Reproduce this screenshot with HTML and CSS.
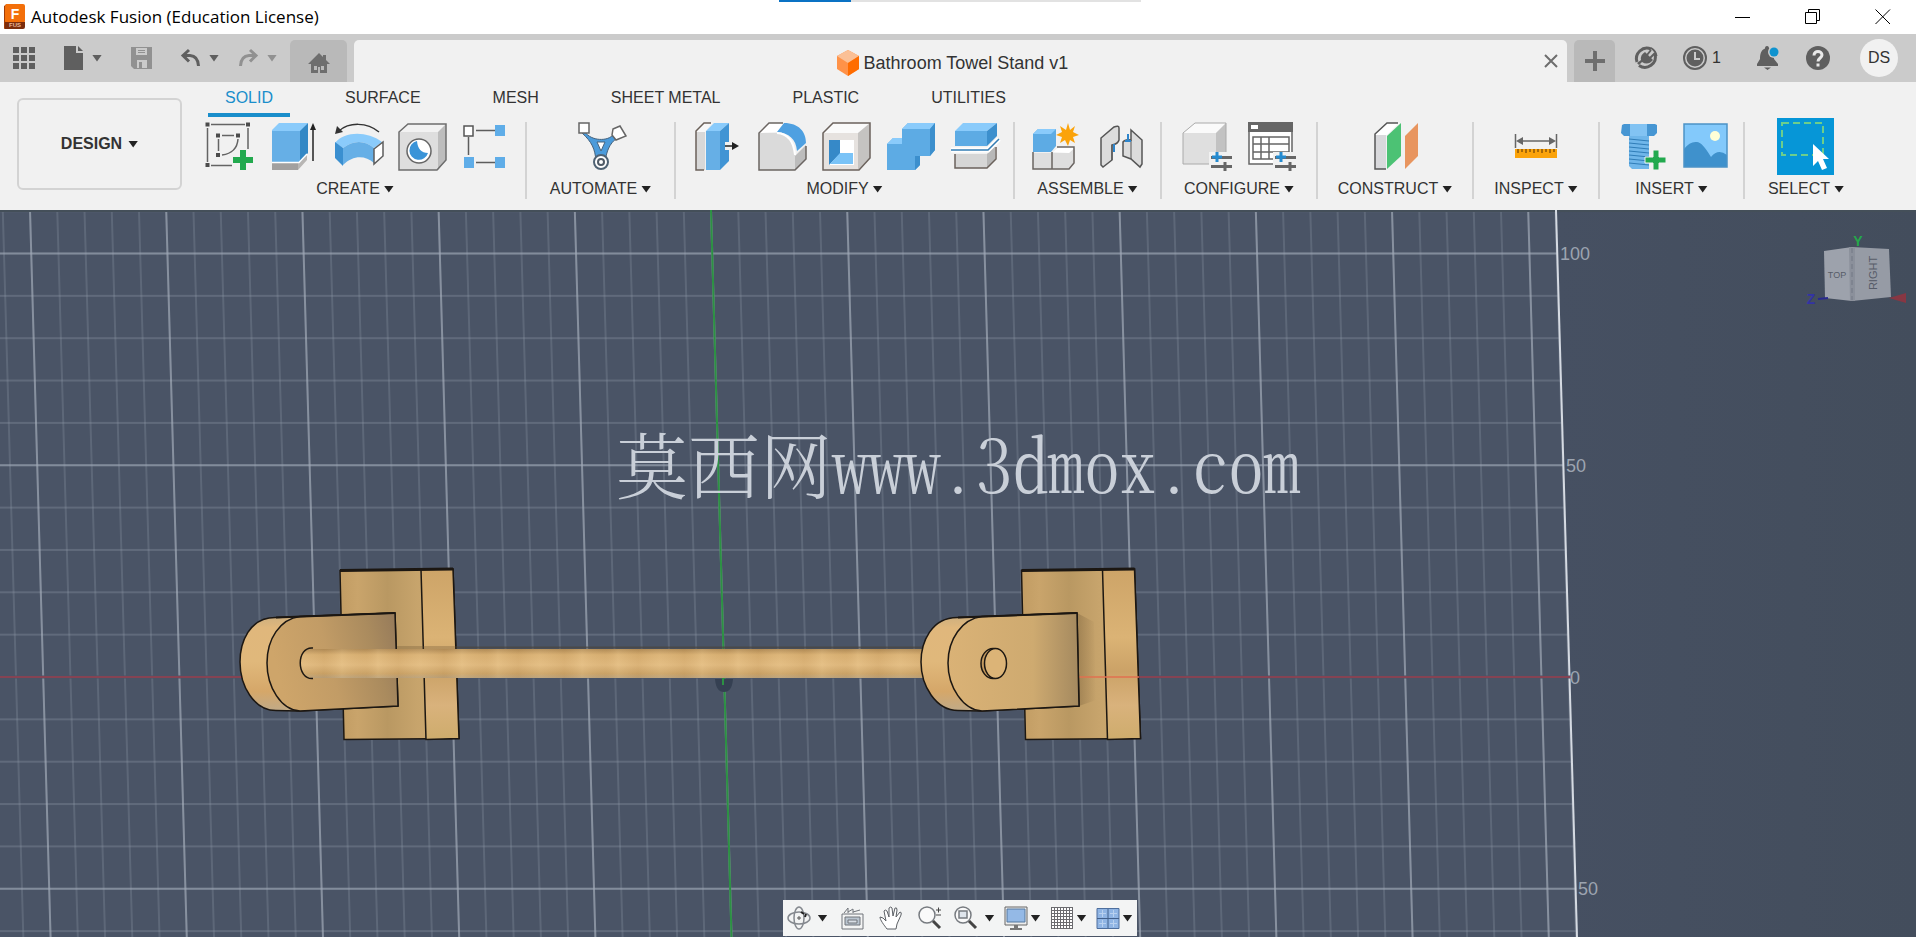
FILE: index.html
```html
<!DOCTYPE html>
<html lang="en">
<head>
<meta charset="utf-8">
<meta name="viewport" content="width=device-width, initial-scale=1">
<title>Autodesk Fusion (Education License)</title>
<link rel="stylesheet" href="styles.css">
</head>
<body>
<div class="app">
  <header class="titlebar">
    <svg class="app-logo" width="22" height="26" viewBox="0 0 22 26" aria-hidden="true">
      <path d="M1 2 4 0V24L1 25Z" fill="#a23c06"/><rect x="2" y="0" width="20" height="19" rx="2" fill="#f36f0a"/><path d="M2 18H22V23Q22 25 20 25H2Z" fill="#7c2d0c"/>
      <text x="12" y="15" class="logo-letter">F</text><text x="12" y="23" class="logo-small">FUS</text>
    </svg>
    <h1 class="titlebar-text">Autodesk Fusion (Education License)</h1>
    <div class="load-track"><div class="load-fill"></div></div>
    <div class="window-controls">
      <button aria-label="Minimize"><svg width="16" height="16" viewBox="0 0 16 16"><path d="M0 8.5H15" stroke="#000"/></svg></button>
      <button aria-label="Restore"><svg width="16" height="16" viewBox="0 0 16 16"><path d="M.5 3.5H11.500V14.500H.5ZM3.500 3V.5H14.500V11.500H12" fill="none" stroke="#000"/></svg></button>
      <button aria-label="Close"><svg width="16" height="16" viewBox="0 0 16 16"><path d="M.5.5 15 15M15 .5.5 15" stroke="#000" fill="none"/></svg></button>
    </div>
  </header>

  <div class="tabstrip">
    <div class="quick">
      <button aria-label="Data panel"><svg width="22" height="22" viewBox="0 0 22 22" fill="#5f5f5f"><path d="M0 0h6v6H0zM8 0h6v6H8zM16 0h6v6h-6zM0 8h6v6H0zM8 8h6v6H8zM16 8h6v6h-6zM0 16h6v6H0zM8 16h6v6H8zM16 16h6v6h-6z"/></svg></button>
      <button class="menu-btn" aria-label="File"><svg width="19" height="24" viewBox="0 0 19 24" fill="#5f5f5f"><path d="M0 0H12V7H19V24H0Z"/><path d="M14 0 19 5H14Z"/></svg><i class="caret"></i></button>
      <button aria-label="Save"><svg width="21" height="22" viewBox="0 0 21 22"><path d="M0 0H21V22H3L0 19Z" fill="#919191"/><path d="M5 1H16V8H5ZM6 13H16V21H6Z" fill="#cbcbcb"/><path d="M7 3.500h7M7 5.500h7" stroke="#919191"/><path d="M8 15H11V21H8Z" fill="#919191"/></svg></button>
      <div class="history">
        <button class="menu-btn" aria-label="Undo"><svg width="19" height="18" viewBox="0 0 19 18" fill="none" stroke="#5f5f5f" stroke-width="3"><path d="M2 6.500H9Q17 7 17.500 17"/><path d="M8 1 2 6.500 8 12.500"/></svg><i class="caret"></i></button>
        <button class="menu-btn muted" aria-label="Redo"><svg width="19" height="18" viewBox="0 0 19 18" fill="none" stroke="#919191" stroke-width="3"><path d="M17 6.500H10Q2 7 1.500 17"/><path d="M11 1 17 6.500 11 12.500"/></svg><i class="caret"></i></button>
      </div>
    </div>
    <button class="home-tab" aria-label="Home"><svg width="22" height="20" viewBox="0 0 22 20"><path d="M11 0 15 4V2H18V7L22 11H19V20H3V11H0Z" fill="#6e6e6e"/><path d="M6 13h3v4H6zM13 13h3v4h-3z" fill="#b9b9b9"/><path d="M10 14h2v6h-2z" fill="#b9b9b9"/></svg></button>
    <div class="doc-tab">
      <svg width="22" height="26" viewBox="0 0 22 26" aria-hidden="true"><path d="M11 0 22 6V19L11 26 0 19V6Z" fill="#ff9248"/><path d="M11 0 22 6 11 13 0 6Z" fill="#fbc096"/><path d="M22 6V19L11 26V13Z" fill="#ff6c00"/></svg>
      <span>Bathroom Towel Stand v1</span>
      <button class="doc-close" aria-label="Close document"><svg width="14" height="14" viewBox="0 0 14 14"><path d="M1 1 13 13M13 1 1 13" stroke="#6e6e6e" stroke-width="2"/></svg></button>
    </div>
    <button class="new-tab" aria-label="New document"><svg width="20" height="20" viewBox="0 0 20 20"><path d="M10 0V20M0 10H20" stroke="#6e6e6e" stroke-width="4"/></svg></button>
    <div class="status">
      <button aria-label="Extensions"><svg width="24" height="24" viewBox="0 0 24 24"><path d="M3 16A10.500 10.500 0 0 1 17 3M21 8A10.500 10.500 0 0 1 5 19.500" fill="none" stroke="#5f5f5f" stroke-width="3"/><path d="M17 2Q22 5 22.500 10" fill="none" stroke="#5f5f5f" stroke-width="2"/><path d="M11 6 19 14Q14 20 8 16L5 19 3 17 7 14Q6 9 11 6Z" fill="#5f5f5f"/><path d="M13 9 17 4M16 12 21 7" stroke="#5f5f5f" stroke-width="2"/></svg></button>
      <button class="jobs" aria-label="Job status"><svg width="24" height="24" viewBox="0 0 24 24"><circle cx="12" cy="12" r="11" fill="none" stroke="#5f5f5f" stroke-width="2"/><circle cx="12" cy="12" r="8.500" fill="#5f5f5f"/><path d="M12 6V13H17" fill="none" stroke="#cbcbcb" stroke-width="2"/></svg><span>1</span></button>
      <button class="bell" aria-label="Notifications"><svg width="24" height="24" viewBox="0 0 24 24"><path d="M10 0C11.500 0 12 1 12 2.500 17 4 17 9 17 13L21 18V20H0V18L3 13C3 8 4 4 8 2.500 8 1 8.500 0 10 0ZM7 21.500H14L10.500 24Z" fill="#5f5f5f"/><circle cx="17" cy="6" r="6" fill="#cbcbcb"/><circle cx="17" cy="6" r="4.500" fill="#0f93cf"/></svg></button>
      <button aria-label="Help"><svg width="24" height="24" viewBox="0 0 24 24"><circle cx="12" cy="12" r="12" fill="#5f5f5f"/><path d="M8 9.500C8 4 16 4.500 16 9 16 12 12 12 12 15.500" fill="none" stroke="#e8e8e8" stroke-width="3"/><path d="M10.500 17.500h3v3h-3z" fill="#e8e8e8"/></svg></button>
      <button class="avatar">DS</button>
    </div>
  </div>

  <section class="ribbon">
    <button class="workspace">DESIGN <i class="caret"></i></button>
    <div class="ribbon-main">
      <nav class="ribbon-tabs">
        <a href="#solid" class="active">SOLID</a><a href="#surface">SURFACE</a><a href="#mesh">MESH</a><a href="#sheet">SHEET METAL</a><a href="#plastic">PLASTIC</a><a href="#utilities">UTILITIES</a>
      </nav>
      <div class="groups">
        <div class="group">
          <div class="tools">
            <button aria-label="Create sketch"><svg viewBox="0 0 48 48"><path d="M8 2.500H42M4.500 6V40M45 6V27M8 43.500H29M19 13.500H31M15.500 17V29M35 17Q34 31 19 33" fill="none" stroke="#646464" stroke-width="1.500"/><path d="M2.500.5h4v4h-4zM43 .5h4v4h-4zM2.500 41h4v4h-4zM13 11.500h4v4h-4zM33 11.500h4v4h-4zM13 31h4v4h-4z" fill="#4c4c4c"/><path d="M37 28H43V35H50V41H43V48H37V41H30V35H37Z" fill="#22a94e"/></svg></button>
            <button aria-label="Extrude"><svg viewBox="0 0 48 48"><path d="M5 41H31L40 32V38L31 48H5Z" fill="#b8b6b4"/><path d="M5 41H31V48H5Z" fill="#a2a09f"/><path d="M5 8 12 1H41L33 10H5Z" fill="#8acbfb"/><path d="M5 9H33V40H5Z" fill="#66afe6"/><path d="M33 9 41 1V31L33 40Z" fill="#3388c5"/><path d="M5 40.500H32L40 32" stroke="#fff" stroke-width="1.500" fill="none"/><path d="M46 39V6" stroke="#222" stroke-width="1.500"/><path d="M46 1 49 8H43Z" fill="#222"/></svg></button>
            <button aria-label="Revolve"><svg viewBox="0 0 48 48"><path d="M4 21C14 9 36 9 51 20L43 26C34 18 22 18 12 26Z" fill="#8acbfb"/><path d="M12 26C22 18 34 18 43 26V41C34 33 22 33 12 43Z" fill="#66afe6"/><path d="M4 20 12 26V44L4 36Z" fill="#3a8fd0"/><path d="M43 27 52 20V34L43 42Z" fill="#fff" stroke="#5d5d5d" stroke-width="1.500"/><path d="M48 10C36 0 18 0 8 9" fill="none" stroke="#333" stroke-width="1.500"/><path d="M4 12 6 4 12 10Z" fill="#333"/></svg></button>
            <button aria-label="Hole"><svg viewBox="0 0 48 48"><path d="M4 10 12 2H51L43 10Z" fill="#f2f2f2"/><path d="M4 10H43V48H4Z" fill="#dedede"/><path d="M43 10 51 2V38L43 48Z" fill="#bdbdbd"/><path d="M4 10 13 2H51V38L42 48H4Z" fill="none" stroke="#6d6d6d" stroke-width="1.500"/><circle cx="24" cy="29" r="12" fill="#fff" stroke="#666" stroke-width="1.500"/><path d="M22 19A9.500 9.500 0 1 0 33 31Q23 31 22 19Z" fill="#3a94d8"/></svg></button>
            <button aria-label="Pattern"><svg viewBox="0 0 48 48"><path d="M17 8.500H36M9.500 15V33M17 40.500H36" stroke="#5d5d5d" stroke-width="1.500"/><path d="M5 4h9v10H5z" fill="#fff" stroke="#555" stroke-width="1.500"/><path d="M36 3h10v11H36zM5 35h10v11H5zM36 35h10v11H36z" fill="#5fade8"/></svg></button>
          </div>
          <button class="group-label">CREATE <i class="caret"></i></button>
        </div>
        <div class="group">
          <div class="tools">
            <button aria-label="Automated modeling"><svg viewBox="0 0 48 48"><path d="M8 10C14 19 31 20 37 12L40 16C32 22 30 29 28 39H19C18 27 15 20 5 11Z" fill="#4b9bdb" stroke="#47637d"/><path d="M20 20H28L24 29Z" fill="#fff" stroke="#47637d"/><path d="M2 1h10v10H2z" fill="#fff" stroke="#666" stroke-width="1.500"/><path d="M36 7 43 4 49 14 39 18 35 13Z" fill="#fff" stroke="#666" stroke-width="1.500"/><circle cx="24" cy="40" r="7" fill="#fff" stroke="#4f6273" stroke-width="2"/><circle cx="24" cy="40" r="3" fill="#fff" stroke="#4f5a66" stroke-width="2"/></svg></button>
          </div>
          <button class="group-label">AUTOMATE <i class="caret"></i></button>
        </div>
        <div class="group">
          <div class="tools">
            <button aria-label="Press pull"><svg viewBox="0 0 48 48"><path d="M3 10H12V48H3Z" fill="#d8d8d8"/><path d="M3 10 12 1H19L12 10Z" fill="#f8f8f8"/><path d="M11 48H3V9L11 1H18" fill="none" stroke="#6b6059" stroke-width="1.500"/><path d="M13 9H27V48H13Z" fill="#66afe6"/><path d="M13 9 21 1H36L27 9Z" fill="#8acbfb"/><path d="M27 9 36 1V39L27 48Z" fill="#4194d4"/><path d="M32 20H40V28H32Z" fill="#f1f1f1"/><path d="M32 24H42" stroke="#222" stroke-width="1.500"/><path d="M46 24 39 20V28Z" fill="#222"/></svg></button>
            <button aria-label="Fillet"><svg viewBox="0 0 48 48"><path d="M2 11H20Q37 14 38 32V48H2Z" fill="#dadada"/><path d="M2 11 11 1H27L20 10Z" fill="#fff"/><path d="M38 34 49 23V37L38 48Z" fill="#bcbcbc"/><path d="M26 1H12L2 11V48H38L49 37V24" fill="none" stroke="#6b6562" stroke-width="1.500"/><path d="M27 1C42 1 49 10 49 21L40 29C39 17 32 11 20 10Z" fill="#4ea0e1"/><path d="M20 11Q36 12 38 33" fill="none" stroke="#fff" stroke-width="2"/></svg></button>
            <button aria-label="Shell"><svg viewBox="0 0 48 48"><path d="M2 11H37V48H2Z" fill="#e6e2df"/><path d="M2 11 12 1H49L37 11Z" fill="#fafafa"/><path d="M37 11 49 1V36L37 48Z" fill="#c5c3c1"/><path d="M2 11 12 1H49V36L38 48H2Z" fill="none" stroke="#6b625c" stroke-width="1.500"/><path d="M8 18h25v25H8z" fill="#fff"/><path d="M8 18H19V32L8 43Z" fill="#3689c8"/><path d="M19 31H32V42H9Z" fill="#7ac3f7"/><path d="M19 18h13v13H19z" fill="#fff"/></svg></button>
            <button aria-label="Combine"><svg viewBox="0 0 48 48"><path d="M2 22 8 16H17V7L23 1H50V28L45 34H35V43L30 48H2Z" fill="#5dabe4"/><path d="M17 7 23 1H50L45 7ZM2 22 8 16H17V22Z" fill="#8acbfb"/><path d="M45 7 50 1V28L45 34ZM30 34H35V43L30 48Z" fill="#3c8fcd"/></svg></button>
            <button aria-label="Split body"><svg viewBox="0 0 48 48"><path d="M6 32H38V46H6Z" fill="#d6d6d6"/><path d="M38 32 46 24V38L38 46Z" fill="#b8b8b8"/><path d="M6 32V46H38L47 37V25" fill="none" stroke="#6b625c" stroke-width="1.500"/><path d="M6 9 14 1H48L38 9Z" fill="#8acbfb"/><path d="M6 9H38V24H6Z" fill="#5dabe4"/><path d="M38 9 48 1V14L38 24Z" fill="#3c8fcd"/><path d="M2 28H39L50 17" fill="none" stroke="#fff" stroke-width="5"/><path d="M2 28H39L50 17" fill="none" stroke="#347db4" stroke-width="1.500"/></svg></button>
          </div>
          <button class="group-label">MODIFY <i class="caret"></i></button>
        </div>
        <div class="group">
          <div class="tools">
            <button aria-label="New component"><svg viewBox="0 0 48 48"><path d="M1 31H37L43 26V40L37 47H1Z" fill="#dedede"/><path d="M21 30 27 25H43L37 31Z" fill="#fff"/><path d="M1 30V47H37L42 41V25H25M20 30V47" fill="none" stroke="#6b6562" stroke-width="1.500"/><path d="M1 12 6 7H24V24L19 30H1Z" fill="#5dabe4"/><path d="M1 12 6 7H24L19 12Z" fill="#8acbfb"/><path d="M36 1 38 8 43 4 41 10 47 13 41 15 43 21 38 18 36 24 33 18 28 21 30 15 24 13 30 10 28 4 34 8Z" fill="#fba30a"/></svg></button>
            <button aria-label="Joint"><svg viewBox="0 0 48 48"><path d="M5 16 18 5Q23 3 23 6V18Q22 22 16 23V38L7 45 5 43Z" fill="#dcdcdc" stroke="#555" stroke-width="1.500"/><path d="M35 8 46 18V42L44 45 35 37 27 34V20Q29 17 35 18Z" fill="#dcdcdc" stroke="#555" stroke-width="1.500"/><path d="M16 23V38M35 18V37" stroke="#555"/><path d="M18 22V30M32 12V20M29 19H35" stroke="#2d85cc" stroke-width="2"/></svg></button>
          </div>
          <button class="group-label">ASSEMBLE <i class="caret"></i></button>
        </div>
        <div class="group">
          <div class="tools">
            <button aria-label="Configure model"><svg viewBox="0 0 48 48"><path d="M0 11H33V42H0Z" fill="#dfdfdf"/><path d="M0 11 12 1H43L33 11Z" fill="#fafafa"/><path d="M33 11 43 1V32L33 42Z" fill="#c2c2c2"/><path d="M0 11 12 1H43V32H33V42H0Z" fill="none" stroke="#aaa"/><path d="M26 30H50V48H26Z" fill="#f1f1f1"/><path d="M28 35.500H49M28 44.500H49M42 40V49" stroke="#666" stroke-width="3"/><path d="M34 30V40M29 35H39" stroke="#258bd0" stroke-width="3"/></svg></button>
            <button aria-label="Configuration table"><svg viewBox="0 0 48 48"><path d="M2 1H45V42H2Z" fill="#fff" stroke="#666" stroke-width="1.500"/><path d="M1 0H46V10H1Z" fill="#666"/><path d="M4 3h7v4H4z" fill="#fff"/><path d="M6 15H42V37H6ZM6 22H42M6 30H42M14 15V37M22 15V37" fill="none" stroke="#666" stroke-width="1.500"/><path d="M26 30H50V49H26Z" fill="#f1f1f1"/><path d="M28 35.500H49M28 44.500H49M43 40V49" stroke="#666" stroke-width="3"/><path d="M34 30V40M29 35H39" stroke="#258bd0" stroke-width="3"/></svg></button>
          </div>
          <button class="group-label">CONFIGURE <i class="caret"></i></button>
        </div>
        <div class="group">
          <div class="tools">
            <button aria-label="Offset plane"><svg viewBox="0 0 48 48"><path d="M4 13H15V47H4Z" fill="#d9d9dc"/><path d="M4 13 16 1H28L16 13Z" fill="#fff"/><path d="M15 47H4V12L16 1H27" fill="none" stroke="#555" stroke-width="1.500"/><path d="M16 14 30 1V34L16 47Z" fill="#4cc274"/><path d="M34 14 47 1V34L34 47Z" fill="#e8955f"/></svg></button>
          </div>
          <button class="group-label">CONSTRUCT <i class="caret"></i></button>
        </div>
        <div class="group">
          <div class="tools">
            <button aria-label="Measure"><svg viewBox="0 0 48 48"><path d="M3.500 12V26M44.500 12V26M8 19H40" stroke="#666" stroke-width="1.500"/><path d="M4 19 11 15V23ZM44 19 37 15V23Z" fill="#666"/><path d="M3 27H45V36H3Z" fill="#fba30a"/><path d="M6 27v4M10 27v3M14 27v4M18 27v3M22 27v4M26 27v3M30 27v4M34 27v3M38 27v4M42 27v3" stroke="#8a5508" stroke-width="1.500"/></svg></button>
          </div>
          <button class="group-label">INSPECT <i class="caret"></i></button>
        </div>
        <div class="group">
          <div class="tools">
            <button aria-label="Insert fastener"><svg viewBox="0 0 48 48"><path d="M13 13H33V47H16L13 44Z" fill="#6fb6ea"/><path d="M13 17 33 19M13 21 33 23M13 25 33 27M13 29 33 31M13 33 33 35M13 37 33 39M13 41 33 43" stroke="#2f7db8"/><path d="M6 3 8 2H39L41 3V11L38 14H8L5 11Z" fill="#4696d3"/><path d="M14 2H31V14H14Z" fill="#82c3f3"/><path d="M37 28H43V35H50V41H43V48H37V41H29V35H37Z" fill="#22a94e" stroke="#f1f1f1"/></svg></button>
            <button aria-label="Insert canvas"><svg viewBox="0 0 48 48"><path d="M4 2H47V45H4Z" fill="#83c9fb"/><path d="M4 27Q10 19 17 20 22 20 31 35 38 26 47 33V45H4Z" fill="#3f91cc"/><path d="M4 2H47V45H4Z" fill="none" stroke="#4c93c6" stroke-width="1.500"/><circle cx="35" cy="14" r="5" fill="#ffffd7"/></svg></button>
          </div>
          <button class="group-label">INSERT <i class="caret"></i></button>
        </div>
        <div class="group">
          <div class="tools">
            <button aria-label="Select"><svg viewBox="0 0 48 48"><path d="M-5 -4H52V53H-5Z" fill="#0696d7"/><path d="M0 1H41V33H0Z" fill="none" stroke="#6cce8b" stroke-width="2" stroke-dasharray="7 4"/><path d="M31 22V44L36 39 40 48 45 46 41 37H47Z" fill="#fff"/></svg></button>
          </div>
          <button class="group-label">SELECT <i class="caret"></i></button>
        </div>
      </div>
    </div>
  </section>

  <main class="viewport">
    <svg class="scene" viewBox="0 210 1916 727" preserveAspectRatio="xMidYMid slice" role="img" aria-label="Bathroom towel stand model">
      <defs>
        <linearGradient id="side" x1="0" x2="1"><stop offset="0" stop-color="#465062"/><stop offset="1" stop-color="#434d5c"/></linearGradient>
        <linearGradient id="plate" x1="0" x2="1"><stop offset="0" stop-color="#c19c63"/><stop offset=".15" stop-color="#c9a46b"/><stop offset=".4" stop-color="#b99862"/><stop offset=".65" stop-color="#c7a46c"/><stop offset="1" stop-color="#cfab70"/></linearGradient>
        <linearGradient id="edge" x1="0" x2="0" y1="0" y2="1"><stop offset="0" stop-color="#cda468"/><stop offset=".4" stop-color="#dbb375"/><stop offset=".6" stop-color="#cba267"/><stop offset=".8" stop-color="#d9b27c"/><stop offset="1" stop-color="#ceac6c"/></linearGradient>
        <linearGradient id="arm" x1="0" x2="1" y1=".2" y2="0"><stop offset="0" stop-color="#cea56a"/><stop offset=".4" stop-color="#c29c66"/><stop offset=".75" stop-color="#aa8b5e"/><stop offset="1" stop-color="#94795a"/></linearGradient>
        <linearGradient id="armRight" x1="0" x2="1"><stop offset="0" stop-color="#dab276"/><stop offset=".65" stop-color="#ceaa70"/><stop offset="1" stop-color="#a4895f"/></linearGradient>
        <linearGradient id="cap" x1="0" x2="0" y1="0" y2="1"><stop offset="0" stop-color="#c8ad80"/><stop offset=".15" stop-color="#e0b77c"/><stop offset=".5" stop-color="#e0b87b"/><stop offset=".8" stop-color="#d5a769"/><stop offset="1" stop-color="#c0aa88"/></linearGradient>
        <linearGradient id="rod" x1="0" x2="0" y1="0" y2="1"><stop offset="0" stop-color="#b08c58"/><stop offset=".2" stop-color="#dab275"/><stop offset=".55" stop-color="#e2bc82"/><stop offset=".85" stop-color="#cca56a"/><stop offset="1" stop-color="#b8a17d"/></linearGradient>
        <linearGradient id="grain" gradientUnits="userSpaceOnUse" x1="300" x2="420" y1="0" y2="0" spreadMethod="repeat"><stop offset="0" stop-color="#f7d7a1" stop-opacity=".1"/><stop offset=".2" stop-color="#a87537" stop-opacity=".12"/><stop offset=".35" stop-color="#f7d7a1" stop-opacity=".18"/><stop offset=".55" stop-color="#ae7d3f" stop-opacity=".08"/><stop offset=".65" stop-color="#f7d7a1" stop-opacity=".15"/><stop offset=".82" stop-color="#a87537" stop-opacity=".12"/><stop offset="1" stop-color="#f7d7a1" stop-opacity=".1"/></linearGradient>
        <linearGradient id="castShadow" x1="0" x2="1"><stop offset="0" stop-color="#6b5333" stop-opacity=".35"/><stop offset="1" stop-color="#6b5333" stop-opacity="0"/></linearGradient>
        <pattern id="minorX" width="27.240" height="900" patternUnits="userSpaceOnUse" patternTransform="translate(711 210) skewX(1.620)"><path d="M0 0V900M27.240 0V900" stroke="#8f98a8" stroke-opacity=".36" stroke-width="1.500"/></pattern>
        <pattern id="majorX" width="136.200" height="900" patternUnits="userSpaceOnUse" patternTransform="translate(711 210) skewX(1.620)"><path d="M0 0V900M136.200 0V900" stroke="#b3bac6" stroke-opacity=".65" stroke-width="1.500"/></pattern>
        <pattern id="minorY" width="1916" height="42.350" patternUnits="userSpaceOnUse" patternTransform="translate(0 253.500)"><path d="M0 0H1916M0 42.350H1916" stroke="#8f98a8" stroke-opacity=".32" stroke-width="2"/></pattern>
        <pattern id="majorY" width="1916" height="211.750" patternUnits="userSpaceOnUse" patternTransform="translate(0 253.500)"><path d="M0 0H1916M0 211.750H1916" stroke="#9ea7b5" stroke-opacity=".55" stroke-width="2"/></pattern>
        <path id="floor" d="M0 210H1556L1577 937H0Z"/>
        <g id="plateShape" stroke="#1c1712" stroke-width="1.500">
          <path d="M340 570.500 453 569 459 738.500 344 739.500Z" fill="url(#plate)"/>
          <path d="M421 569.500 453 569 459 738.500 426 739.500Z" fill="url(#edge)"/>
          <path d="M340 570.500 453 569" stroke-width="3"/>
        </g>
      </defs>
      <rect x="0" y="210" width="1916" height="727" fill="#4a5466"/>
      <path d="M1556 210H1916V937H1577Z" fill="url(#side)"/>
      <use href="#floor" fill="url(#minorX)"/><use href="#floor" fill="url(#minorY)"/>
      <use href="#floor" fill="url(#majorX)"/><use href="#floor" fill="url(#majorY)"/>
      <path d="M0 211H1916" stroke="#444f59" stroke-width="2"/>
      <path d="M1556 210 1577 937" stroke="#d5dae2" stroke-width="2"/>
      <path d="M0 677H1571" stroke="#4a5466" stroke-width="3"/>
      <path d="M0 677H1571" stroke="#854353" stroke-width="2"/>
      <path d="M711 210 731.500 937" stroke="#2c9143" stroke-width="2"/>
      <path d="M715 679H733Q732 692 724 692 716 692 715 679Z" fill="#354052"/><path d="M723 677v8" stroke="#2c9143" stroke-width="2"/>
      <g class="axis-number"><text x="1560" y="260">100</text><text x="1566" y="472">50</text><text x="1570" y="684">0</text><text x="1578" y="895">50</text></g>

      <use href="#plateShape"/>
      <path d="M397 646H457V651H397Z" fill="#6b5333" opacity=".3"/>
      <g stroke="#1c1712" stroke-width="1.500">
        <path d="M395 613 276 617.500C249 617 240 643 240 662 240 686 254 710.500 276 710.500L298 711 398 706Z" fill="url(#cap)"/>
        <path d="M395 613 300 616.500C280 619 267 639 267 663 267 687 281 710 300 711L398 706Z" fill="url(#arm)"/>
        <path d="M395 613 276 617.500" stroke-width="2"/>
      </g>
      <path d="M312 649H926V678H312Q300 676 300 663 301 650 312 649Z" fill="url(#rod)"/>
      <path d="M312 649H926V678H312Q300 676 300 663 301 650 312 649Z" fill="url(#grain)"/>
      <path d="M457 647.500H926" stroke="#4a453d" stroke-opacity=".7" stroke-width="2"/>
      <path d="M313 648C296 646 296 680 313 678.500" fill="none" stroke="#1c1712" stroke-width="1.500"/>
      <use href="#plateShape" x="681.500"/>
      <path d="M1077 613 1094 622 1096 700 1079 706Z" fill="url(#castShadow)"/>
      <path d="M1079 677H1139" stroke="#e0714f" stroke-width="1.500"/>
      <g stroke="#1c1712" stroke-width="1.500">
        <path d="M1077 613 958 617.500C931 617 921 643 921 662 921 686 936 710.500 958 710.500L980 711 1079 706Z" fill="url(#cap)"/>
        <path d="M1077 613 982 616.500C962 619 948 639 948 663 948 687 963 710 982 711L1079 706Z" fill="url(#armRight)"/>
        <path d="M1077 613 958 617.500" stroke-width="2"/>
        <ellipse cx="993" cy="663.500" rx="12" ry="15" fill="#c49a5f"/><ellipse cx="995.500" cy="663.500" rx="11" ry="15" fill="#dcb477"/>
      </g>
      <text class="watermark" x="616" y="493">莫西网www.3dmox.com</text>
    </svg>

    <svg class="view-cube" width="120" height="90" viewBox="1796 226 120 90" role="img" aria-label="View cube">
      <path d="M1852 247 1889 249 1891 297 1852 301Z" fill="#969ba5"/>
      <path d="M1824 251 1852 247 1852 301 1825 298Z" fill="#9da2ac"/>
      <path d="M1849 247 1855 248V301H1850Z" fill="#8b909b"/><path d="M1852 248V300" stroke="#737985" stroke-dasharray="5 3"/>
      <text class="cube-top" x="1837" y="278">TOP</text>
      <text class="cube-right" transform="translate(1877 273) rotate(-90)">RIGHT</text>
      <text class="axis-letter" x="1858" y="246" fill="#25a84a">Y</text>
      <text class="axis-letter" x="1811" y="304" fill="#3333a4">Z</text>
      <path d="M1818 299 1828 298" stroke="#29298f" stroke-width="2"/>
      <path d="M1889 298 1906 293V303Z" fill="#873743"/>
    </svg>

    <div class="navbar" role="toolbar" aria-label="Navigation">
      <button aria-label="Orbit"><svg viewBox="0 0 24 24" fill="none" stroke="#85898f" stroke-width="1.500"><ellipse cx="12" cy="12" rx="5" ry="11"/><ellipse cx="12" cy="12" rx="11" ry="6"/><path d="M10 12h4M12 10v4" stroke="#555" stroke-width="1"/><path d="M14 6 17 8M19 8 18 11" stroke="#222" stroke-width="2"/></svg><i class="caret"></i></button>
      <button class="plain" aria-label="Look at"><svg viewBox="0 0 24 24" fill="none" stroke="#70747a"><path d="M2 8H23V23H2Z"/><path d="M5 11H20V19H5Z" fill="#b9c4cf"/><path d="M8 14h9v3H8z" fill="#d9dfe6"/><path d="M4 7 8 2V7M8 6 13 3V7M13 6 20 4"/></svg></button>
      <button class="plain" aria-label="Pan"><svg viewBox="0 0 24 24" fill="#fff" stroke="#5d6166" stroke-linejoin="round"><path d="M8 23C5 19 1 14 1 11Q4 11 7 15L5 5Q6 3 8 5L10 11 10 2Q12 0 13 2L14 10 16 2Q18 1 18 4L17 11 21 6Q23 6 22 9L18 18 17 23Z"/></svg></button>
      <button class="plain" aria-label="Zoom"><svg viewBox="0 0 24 24" fill="none" stroke="#777b80" stroke-width="1.500"><circle cx="9" cy="9" r="8" fill="#fafafa"/><path d="M15 15 22 22" stroke="#444" stroke-width="3"/><path d="M18 4h5M20.500 1.500v5M18 9h5" stroke="#444" stroke-width="1"/></svg></button>
      <button aria-label="Zoom window"><svg viewBox="0 0 24 24" fill="none" stroke="#777b80" stroke-width="1.500"><circle cx="9" cy="9" r="8" fill="#fafafa"/><path d="M15 15 22 22" stroke="#444" stroke-width="3"/><path d="M5 5h8v7H5z" fill="#dfe5ec"/></svg><i class="caret"></i></button>
      <button class="tight" aria-label="Display settings"><svg viewBox="0 0 24 24"><path d="M1 1H23V19H1Z" fill="#ececec" stroke="#666"/><path d="M3 3H21V16H3Z" fill="#94b9e6" stroke="#55789f"/><path d="M10 19H14V22H18V24H6V22H10Z" fill="#777"/></svg><i class="caret"></i></button>
      <button class="tight" aria-label="Grid settings"><svg viewBox="0 0 24 24"><path d="M1 1H23V23H1Z" fill="#fff"/><path d="M1.500 1V23M4.500 1V23M7.500 1V23M10.500 1V23M13.500 1V23M16.500 1V23M19.500 1V23M22.500 1V23M1 1.500H23M1 4.500H23M1 7.500H23M1 10.500H23M1 13.500H23M1 16.500H23M1 19.500H23M1 22.500H23" stroke="#6b6b6f"/></svg><i class="caret"></i></button>
      <button class="tight" aria-label="Viewports"><svg viewBox="0 0 24 24"><path d="M1 2.500H23V22.500H1Z" fill="#90b5e4" stroke="#4e6f9e"/><path d="M12 3V22M1 12.500H23" stroke="#41608c"/><path d="M3 7.500H10M14 7.500H21M3 17.500H10M14 17.500H21M6.500 4V11M17.500 4V11M6.500 14V21M17.500 14V21" stroke="#b9d1ef"/></svg><i class="caret"></i></button>
    </div>
  </main>
</div>
</body>
</html>
```
FILE: styles.css
```css
* { box-sizing: border-box; }
body { margin: 0; font: 16px/20px "Liberation Sans", Arial, sans-serif; color: #333; }
button { border: 0; padding: 0; background: none; font: inherit; color: inherit; display: flex; align-items: center; }
svg { display: block; flex: none; overflow: visible; }
.app { display: flex; flex-direction: column; height: 100vh; min-height: 480px; overflow: hidden; }

.caret { width: 10px; height: 7px; flex: none; background: currentColor; clip-path: polygon(0 0, 100% 0, 50% 100%); }

.titlebar { position: relative; display: flex; align-items: center; height: 34px; padding: 0 25px 0 3px; background: #fff; }
.app-logo { margin-right: 6px; }
.logo-letter { font: bold 14px "Liberation Sans", sans-serif; fill: #fff; text-anchor: middle; }
.logo-small { font: bold 6px "Liberation Sans", sans-serif; fill: #e9b99c; text-anchor: middle; }
.titlebar-text { margin: 0; font: 17px/24px "Open Sans", "Noto Sans", sans-serif; color: #000; }
.load-track { position: absolute; top: 0; left: 50%; width: 362px; height: 2px; margin-left: -179px; background: #e2e2e2; }
.load-fill { width: 20%; height: 2px; background: #0a72c4; }
.window-controls { display: flex; gap: 54px; margin-left: auto; }

.tabstrip { display: flex; align-items: flex-end; height: 48px; padding-top: 6px; background: #cbcbcb; }
.quick { display: flex; align-items: center; gap: 29px; height: 48px; padding: 0 13px; color: #5f5f5f; }
.menu-btn { gap: 9px; }
.muted { color: #919191; }
.history { display: flex; gap: 20px; }
.home-tab { justify-content: center; width: 57px; height: 42px; padding-top: 4px; background: #b9b9b9; border-radius: 5px 5px 0 0; }
.doc-tab { flex: 1; display: flex; align-items: center; justify-content: center; gap: 5px; position: relative; height: 42px; margin: 0 7px; padding: 4px 16px 0 0; background: #f1f1f1; border-radius: 5px 5px 0 0; font-size: 18px; white-space: nowrap; }
.doc-close { position: absolute; right: 9px; top: 14px; }
.new-tab { justify-content: center; width: 41px; height: 42px; background: #b9b9b9; border-radius: 5px 5px 0 0; }
.status { display: flex; align-items: center; gap: 25px; height: 48px; padding: 0 18px 0 19px; }
.jobs { gap: 5px; width: 37px; }
.bell { margin-left: 12px; }
.avatar { justify-content: center; width: 38px; height: 38px; margin-left: 5px; border-radius: 50%; background: #f1f1f1; }

.ribbon { display: flex; align-items: flex-start; height: 128px; padding: 0 0 0 17px; background: #f1f1f1; }
.workspace { flex: none; justify-content: center; gap: 6px; width: 165px; height: 92px; margin-top: 16px; border: 2px solid #d3d3d3; border-radius: 6px; font-weight: bold; }
.ribbon-main { flex: 1; padding-left: 3px; }
.ribbon-tabs { display: flex; gap: 38px; height: 35px; padding-left: 23px; }
.ribbon-tabs a { padding: 6px 17px 0; color: #333; text-decoration: none; white-space: nowrap; border-bottom: 4px solid transparent; }
.ribbon-tabs .active { color: #1a8ecb; border-color: #1a8ecb; }
.groups { display: grid; grid-template-columns: 342px 149px 339px 147px 156px 156px 126px 145px 122px; margin-top: 5px; }
.group { display: flex; flex-direction: column; align-items: center; gap: 9px; border-right: 2px solid #d3d3d3; }
.group:last-child { border: 0; }
.tools { display: flex; gap: 16px; }
.tools svg { width: 48px; height: 48px; }
.group-label { gap: 4px; height: 20px; white-space: nowrap; }
.workspace .caret, .group-label .caret, .navbar .caret { color: #222; }

.viewport { position: relative; flex: 1; min-height: 0; overflow: hidden; background: #4a5466; }
.scene { width: 100%; height: 100%; overflow: hidden; }
.axis-number { font: 18px "Liberation Sans Narrow", "Liberation Sans", sans-serif; fill: #9ca4b0; }
.watermark { font: 300 72px "Noto Serif CJK SC", "Noto Sans CJK SC", serif; font-feature-settings: "hwid"; fill: #c9cfd8; }
.view-cube { position: absolute; top: 16px; right: 0; }
.cube-top { font: 9px "Liberation Sans", sans-serif; fill: #565c68; text-anchor: middle; }
.cube-right { font: 11px "Liberation Sans", sans-serif; fill: #565c68; text-anchor: middle; }
.axis-letter { font: bold 14px "Liberation Sans", sans-serif; text-anchor: middle; }

.navbar { position: absolute; left: 3px; right: 0; bottom: 1px; width: fit-content; margin: 0 auto; display: flex; align-items: center; gap: 9px; height: 36px; padding: 0 4px; background: #f3f4f4; }
.navbar svg { width: 24px; height: 24px; }
.navbar button { gap: 7px; }
.navbar .plain { padding: 0 3px; }
.navbar .tight { gap: 3px; }
```
